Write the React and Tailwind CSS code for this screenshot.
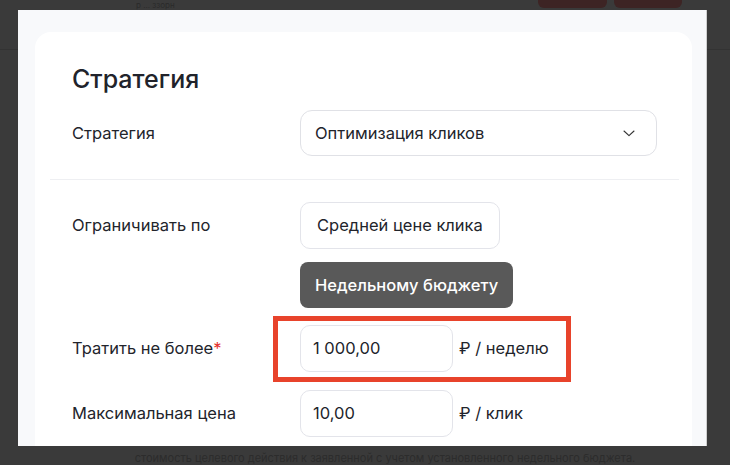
import React from 'react';

const font = { fontFamily: 'Inter, "Noto Sans", sans-serif' };

const Field = ({ value, unit }) => (
  <div className="flex items-center">
    <div className="w-[153px] h-[47px] rounded-[10px] border border-[#e3e4ea] bg-white flex items-center pl-[12px] text-[16.5px] text-[#22242b]">
      {value}
    </div>
    <span className="ml-[6px] text-[16.5px] text-[#22242b]">{unit}</span>
  </div>
);

const Row = ({ label, children, className = '' }) => (
  <div className={`flex ${className}`}>
    <div className="w-[228px] shrink-0 h-[47px] flex items-center text-[16.5px] text-[#22242b]">{label}</div>
    <div className="flex-1">{children}</div>
  </div>
);

export default function App() {
  return (
    <div className="relative w-[730px] h-[465px] overflow-hidden bg-[#3a3a3a]" style={font}>
      {/* page underneath */}
      <div className="h-[50px] border-b border-[#333333] flex items-start">
        <span className="ml-[136px] mt-[1px] text-[8px] text-[#2a2a2a] leading-none">р ... ззорн</span>
        <div className="ml-auto mr-[48px] flex gap-[7px]">
          <div className="w-[69px] h-[8px] rounded-b-[6px] bg-[#3d2424]" />
          <div className="w-[68px] h-[8px] rounded-b-[6px] bg-[#3d2424]" />
        </div>
      </div>
      <div className="absolute left-0 right-0 top-[453px] text-center pl-[40px] text-[11px] text-[#2c2c2c] leading-none">
        стоимость целевого действия к заявленной с учетом установленного недельного бюджета.
      </div>

      {/* modal */}
      <div className="absolute left-[18px] top-[10px] w-[689px] h-[436px] bg-[#f8f9fb] border-r border-[#cfcfcf] pt-[22px] pl-[17px] pr-[14px]">
        <div className="bg-white rounded-t-[16px] h-full pt-[30px]">
          <h2 className="pl-[37px] text-[25px] leading-[34px] font-medium text-[#21232b]">Стратегия</h2>

          <Row label="Стратегия" className="pl-[37px] pr-[35px] mt-[14px]">
            <div className="h-[46px] rounded-[12px] border border-[#e0e1e6] flex items-center justify-between pl-[14px] pr-[21px] text-[16.5px] text-[#22242b]">
              <span>Оптимизация кликов</span>
              <svg width="12" height="7" viewBox="0 0 12 7" fill="none">
                <path d="M1 1l5 4.6L11 1" stroke="#333" strokeWidth="1.1" strokeLinecap="round" strokeLinejoin="round" />
              </svg>
            </div>
          </Row>

          <div className="mt-[22px] ml-[15px] mr-[13px] border-t border-[#eeeff2]" />

          <Row label="Ограничивать по" className="pl-[37px] mt-[22px]">
            <div className="flex flex-col items-start gap-[13px]">
              <button className="h-[47px] px-[16px] rounded-[10px] border border-[#e3e4ea] bg-white text-[16.5px] text-[#22242b]">
                Средней цене клика
              </button>
              <button className="h-[46px] px-[15px] rounded-[8px] bg-[#595959] text-[16.5px] font-medium text-white">
                Недельному бюджету
              </button>
            </div>
          </Row>

          <Row
            label={<span>Тратить не более<span className="text-[#e5322d]">*</span></span>}
            className="pl-[37px] mt-[17px]"
          >
            <div className="relative">
              <Field value="1 000,00" unit="₽ / неделю" />
              <div className="absolute left-[-27px] top-[-9px] w-[298px] h-[66px] border-[5px] border-[#e8432b] pointer-events-none" />
            </div>
          </Row>

          <Row label="Максимальная цена" className="pl-[37px] mt-[18px]">
            <Field value="10,00" unit="₽ / клик" />
          </Row>
        </div>
      </div>
    </div>
  );
}
